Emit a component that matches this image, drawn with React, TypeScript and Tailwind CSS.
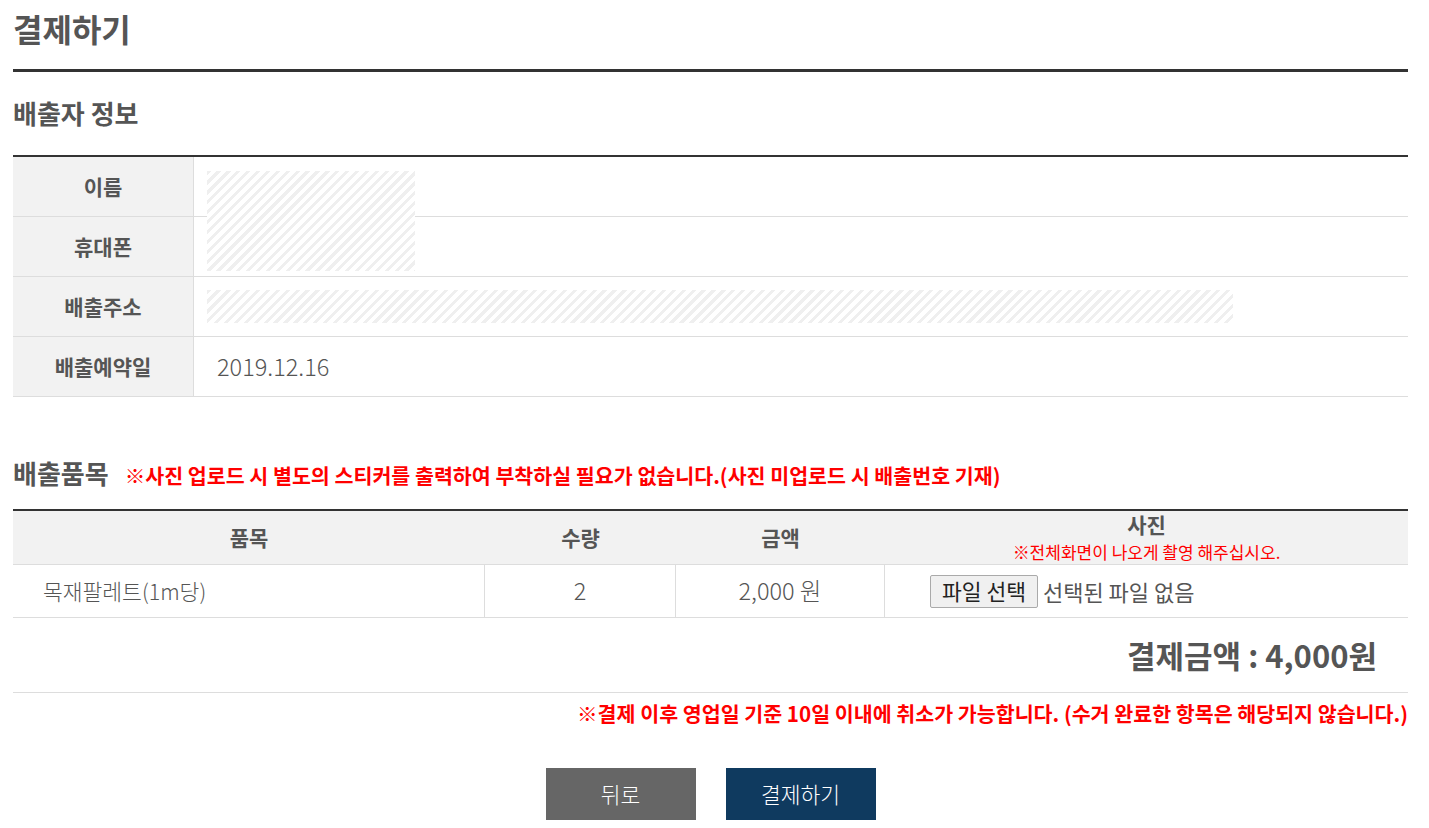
import React from "react";

const hatch =
  "bg-[repeating-linear-gradient(135deg,#efefef_0px,#efefef_3px,#ffffff_3px,#ffffff_7px)]";

export default function App() {
  const font = { fontFamily: '"Noto Sans CJK KR", "Noto Sans", sans-serif' };
  return (
    <div className="bg-white w-[1429px] min-h-[828px]" style={font}>
      <div className="mx-[13px] w-[1395px]">
        <h1 className="pt-[4px] h-[69px] text-[32px] leading-[48px] font-bold text-[#555]">결제하기</h1>
        <div className="h-[3px] bg-[#333]" />
        <h2 className="mt-[24px] h-[59px] text-[26px] leading-[34px] font-bold text-[#555]">배출자 정보</h2>

        <div className="relative border-t-2 border-[#333]">
          {[
            ["이름", ""],
            ["휴대폰", ""],
            ["배출주소", ""],
            ["배출예약일", "2019.12.16"],
          ].map(([k, v]) => (
            <div key={k} className="flex h-[60px] border-b border-[#ddd]">
              <div className="w-[181px] shrink-0 bg-[#f2f2f2] border-r border-[#ddd] flex items-center justify-center text-[21px] font-bold text-[#555]">
                {k}
              </div>
              <div className="flex items-center pl-[23px] text-[23.5px] font-light text-[#555]">{v}</div>
            </div>
          ))}
          <div className={`absolute left-[194px] top-[14px] w-[208px] h-[100px] ${hatch}`} />
          <div className={`absolute left-[194px] top-[133px] w-[1026px] h-[33px] ${hatch}`} />
        </div>

        <div className="mt-[56px] flex items-baseline h-[56px]">
          <span className="text-[26px] font-bold text-[#555]">배출품목</span>
          <span className="ml-[16px] text-[20.6px] font-bold text-[#f00]">
            ※사진 업로드 시 별도의 스티커를 출력하여 부착하실 필요가 없습니다.(사진 미업로드 시 배출번호 기재)
          </span>
        </div>

        <div className="border-t-2 border-[#333]">
          <div className="flex h-[54px] bg-[#f2f2f2] border-b border-[#ddd] text-[21px] font-bold text-[#555]">
            <div className="w-[472px] flex items-center justify-center">품목</div>
            <div className="w-[191px] flex items-center justify-center">수량</div>
            <div className="w-[209px] flex items-center justify-center">금액</div>
            <div className="flex-1 flex flex-col items-center justify-start">
              <span className="leading-[26px]">사진</span>
              <span className="mt-[6px] text-[17px] leading-[18px] font-normal text-[#f00]">※전체화면이 나오게 촬영 해주십시오.</span>
            </div>
          </div>
          <div className="flex h-[53px] border-b border-[#ddd] font-light text-[#555]">
            <div className="w-[472px] flex items-center pl-[30px] border-r border-[#ddd] text-[21.5px]">목재팔레트(1m당)</div>
            <div className="w-[191px] flex items-center justify-center border-r border-[#ddd] text-[23.5px]">2</div>
            <div className="w-[209px] flex items-center justify-center border-r border-[#ddd] text-[23.5px]">2,000 원</div>
            <div className="flex-1 flex items-center pl-[45px]">
              <span className="h-[33px] px-[11px] flex items-center border border-[#aaa] rounded-[2px] bg-[#f0f0f0] text-[21.5px] font-normal text-[#222]">
                파일 선택
              </span>
              <span className="ml-[5px] text-[22px] font-normal text-[#555]">선택된 파일 없음</span>
            </div>
          </div>
        </div>

        <div className="h-[75px] border-b border-[#ddd] flex items-center justify-end pr-[31px] text-[31px] font-bold text-[#555]">
          결제금액 : 4,000원
        </div>
        <div className="mt-[5px] text-right text-[20.6px] font-bold text-[#f00] leading-[30px]">
          ※결제 이후 영업일 기준 10일 이내에 취소가 가능합니다. (수거 완료한 항목은 해당되지 않습니다.)
        </div>

        <div className="mt-[40px] flex justify-center gap-[30px]">
          <button className="w-[150px] h-[52px] bg-[#666] text-white text-[21.5px] font-light">뒤로</button>
          <button className="w-[150px] h-[52px] bg-[#0f3a5f] text-white text-[21.5px] font-light">결제하기</button>
        </div>
      </div>
    </div>
  );
}
